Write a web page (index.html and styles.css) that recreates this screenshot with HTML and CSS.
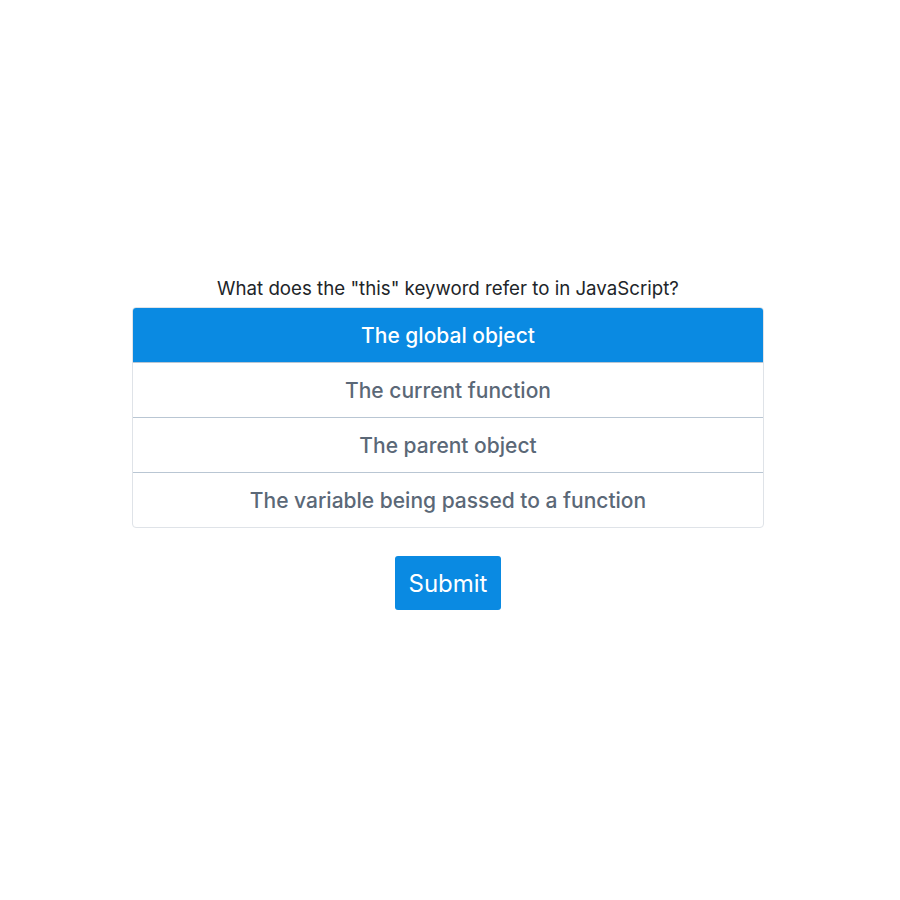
FILE: index.html
```html
<!DOCTYPE html>
<html>
<head>
<meta charset="utf-8">
<link rel="stylesheet" href="styles.css">
</head>
<body>
<div class="quiz">
  <p class="question">What does the "this" keyword refer to in JavaScript?</p>
  <ul class="options">
    <li class="option active">The global object</li>
    <li class="option">The current function</li>
    <li class="option">The parent object</li>
    <li class="option">The variable being passed to a function</li>
  </ul>
  <div class="actions">
    <button class="submit">Submit</button>
  </div>
</div>
</body>
</html>
```

FILE: styles.css
```css
html, body {
  margin: 0;
  padding: 0;
  background: #ffffff;
}
.quiz {
  width: 632px;
  margin: 0 0 0 132px;
  padding-top: 275px;
  font-family: Inter, "Liberation Sans", Arial, sans-serif;
}
.question {
  margin: 0 0 5px;
  text-align: center;
  font-size: 18.7px;
  line-height: 27px;
  color: #212529;
}
.options {
  list-style: none;
  margin: 0;
  padding: 0;
  border: 1px solid #dfe3e8;
  border-radius: 4px;
  overflow: hidden;
}
.option {
  height: 54px;
  display: flex;
  align-items: center;
  justify-content: center;
  font-family: Inter, "Liberation Sans", sans-serif;
  font-weight: 500;
  font-size: 21px;
  color: #5b6877;
  border-top: 1px solid #b9c6d3;
}
.option:first-child {
  border-top: none;
}
.option.active {
  background: #0a8ae2;
  color: #ffffff;
}
.actions {
  display: flex;
  justify-content: center;
  margin-top: 28px;
}
.submit {
  width: 106px;
  height: 54px;
  border: none;
  border-radius: 3px;
  background: #0a8ae2;
  color: #ffffff;
  font-family: Inter, "Liberation Sans", Arial, sans-serif;
  font-size: 24px;
  padding: 0;
}
```
